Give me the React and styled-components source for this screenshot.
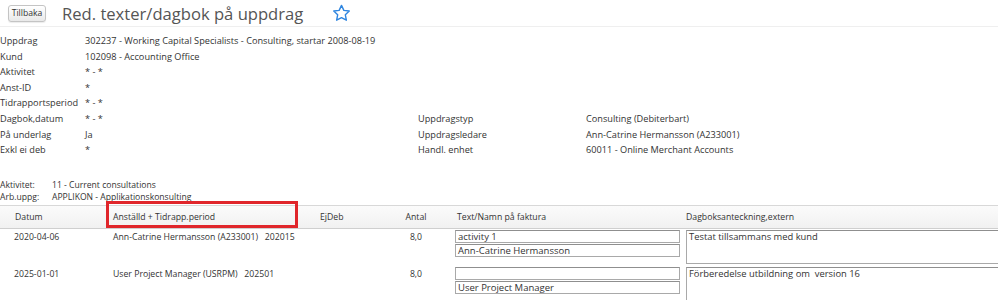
import React from "react";
import styled, { createGlobalStyle } from "styled-components";

const Global = createGlobalStyle`
  html, body { margin: 0; padding: 0; background: #fff; overflow: hidden; }
  body { font-family: "Open Sans", "Liberation Sans", sans-serif; color: #333; }
`;

const Page = styled.div`
  width: 998px;
  height: 300px;
  overflow: hidden;
`;

const Header = styled.div`
  display: flex;
  align-items: center;
  height: 27px;
  padding-left: 8px;
  border-bottom: 1px solid #efefef;
  box-sizing: border-box;
`;

const BackButton = styled.button`
  font-family: inherit;
  font-size: 8.6px;
  color: #333;
  height: 17px;
  width: 38px;
  padding: 0;
  border: 1px solid #c4c4c4;
  border-radius: 3px;
  background: linear-gradient(#ffffff, #e9e9e9);
  box-shadow: 0 1px 1px rgba(0,0,0,0.08);
`;

const Title = styled.h1`
  margin: 0 0 0 16px;
  font-size: 16.6px;
  font-weight: 400;
  color: #555;
  line-height: 27px;
`;

const StarWrap = styled.span`
  margin-left: 29px;
  display: flex;
  align-items: center;
`;

const InfoGrid = styled.div`
  display: grid;
  grid-template-columns: 85px 333px 168px 1fr;
  grid-auto-rows: 15.6px;
  padding-top: 6px;
  font-size: 9.2px;
  line-height: 15.6px;
  color: #333;
`;

const Cell = styled.div`
  white-space: nowrap;
  grid-column: ${(p) => p.$col || "auto"};
`;

const Activity = styled.div`
  display: grid;
  grid-template-columns: 52px 1fr;
  grid-auto-rows: 12px;
  margin-top: 21px;
  font-size: 8.6px;
  line-height: 12px;
  color: #333;
`;

const Table = styled.div`
  margin-top: 2px;
  width: 1010px;
`;

const Row = styled.div`
  display: grid;
  grid-template-columns: 106px 194px 90px 52px 242px 1fr;
  font-size: 8.7px;
  color: #333;
  ${(p) =>
    p.$head
      ? `
    height: 22px;
    align-items: stretch;
    background: linear-gradient(#fbfbfb, #f1f1f1);
    border-top: 1px solid #d8d8d8;
    border-bottom: 1px solid #cfcfcf;
  `
      : `
    height: 36px;
    padding-top: 1px;
    align-items: start;
  `}
`;

const HeadCol = styled.div`
  position: relative;
  display: flex;
  align-items: center;
  justify-content: ${(p) => (p.$center ? "center" : "flex-start")};
  white-space: nowrap;
  padding-left: ${(p) => p.$pl ?? 0}px;
`;

const Col = styled.div`
  white-space: nowrap;
  padding-left: ${(p) => p.$pl ?? 0}px;
  text-align: ${(p) => (p.$center ? "center" : "left")};
  padding-top: 1px;
  line-height: 13px;
`;

const Highlight = styled.div`
  position: absolute;
  left: 0;
  top: -5px;
  width: 192px;
  height: 27px;
  border: 3px solid #e0262b;
  box-sizing: border-box;
  pointer-events: none;
`;

const Inputs = styled.div`
  display: flex;
  flex-direction: column;
  gap: 1px;
  padding-left: 13px;
`;

const Field = styled.div`
  width: 225px;
  height: 13px;
  box-sizing: border-box;
  border: 1px solid #a9a9a9;
  border-top-color: #8f8f8f;
  font-size: 9.5px;
  line-height: 11px;
  padding-left: 2px;
  color: #333;
`;

const Area = styled.div`
  margin-left: 2px;
  width: 340px;
  height: 34px;
  box-sizing: border-box;
  border: 1px solid #a9a9a9;
  border-top-color: #8f8f8f;
  font-size: 9.4px;
  line-height: 12px;
  padding: 0 2px;
  color: #333;
  white-space: pre;
`;

const Star = () => (
  <svg width="19" height="18" viewBox="0 0 24 23" fill="none">
    <path
      d="M12 1.8l3 6.3 6.9.9-5 4.8 1.3 6.9L12 17.4l-6.2 3.3 1.3-6.9-5-4.8 6.9-.9z"
      stroke="#2f86e0"
      strokeWidth="1.8"
      strokeLinejoin="round"
    />
  </svg>
);

const info = [
  ["Uppdrag", "302237 - Working Capital Specialists - Consulting, startar 2008-08-19"],
  ["Kund", "102098 - Accounting Office"],
  ["Aktivitet", "* - *"],
  ["Anst-ID", "*"],
  ["Tidrapportsperiod", "* - *"],
  ["Dagbok,datum", "* - *", "Uppdragstyp", "Consulting (Debiterbart)"],
  ["På underlag", "Ja", "Uppdragsledare", "Ann-Catrine Hermansson (A233001)"],
  ["Exkl ei deb", "*", "Handl. enhet", "60011 - Online Merchant Accounts"],
];

const rows = [
  {
    date: "2020-04-06",
    who: "Ann-Catrine Hermansson (A233001)\u00a0\u00a0\u00a0202015",
    antal: "8,0",
    t1: "activity 1",
    t2: "Ann-Catrine Hermansson",
    note: "Testat tillsammans med kund",
  },
  {
    date: "2025-01-01",
    who: "User Project Manager (USRPM)\u00a0\u00a0\u00a0202501",
    antal: "8,0",
    t1: "",
    t2: "User Project Manager",
    note: "Förberedelse utbildning om  version 16",
  },
];

export default function App() {
  return (
    <Page>
      <Global />
      <Header>
        <BackButton>Tillbaka</BackButton>
        <Title>Red. texter/dagbok på uppdrag</Title>
        <StarWrap>
          <Star />
        </StarWrap>
      </Header>
      <InfoGrid>
        {info.map(([l, v, rl, rv]) => (
          <React.Fragment key={l}>
            <Cell>{l}</Cell>
            <Cell>{v}</Cell>
            {rl ? (
              <>
                <Cell>{rl}</Cell>
                <Cell>{rv}</Cell>
              </>
            ) : (
              <Cell $col="3 / 5" />
            )}
          </React.Fragment>
        ))}
      </InfoGrid>
      <Activity>
        <Cell>Aktivitet:</Cell>
        <Cell>11 - Current consultations</Cell>
        <Cell>Arb.uppg:</Cell>
        <Cell>APPLIKON - Applikationskonsulting</Cell>
      </Activity>
      <Table>
        <Row $head>
          <HeadCol $pl={15}>Datum</HeadCol>
          <HeadCol $pl={7}>
            Anställd + Tidrapp.period
            <Highlight />
          </HeadCol>
          <HeadCol $pl={20}>EjDeb</HeadCol>
          <HeadCol $center>Antal</HeadCol>
          <HeadCol $pl={15}>Text/Namn på faktura</HeadCol>
          <HeadCol $pl={2}>Dagboksanteckning,extern</HeadCol>
        </Row>
        {rows.map((r) => (
          <Row key={r.date}>
            <Col $pl={14}>{r.date}</Col>
            <Col $pl={7}>{r.who}</Col>
            <Col />
            <Col $center>{r.antal}</Col>
            <Inputs>
              <Field>{r.t1}</Field>
              <Field>{r.t2}</Field>
            </Inputs>
            <div>
              <Area>{r.note}</Area>
            </div>
          </Row>
        ))}
      </Table>
    </Page>
  );
}
